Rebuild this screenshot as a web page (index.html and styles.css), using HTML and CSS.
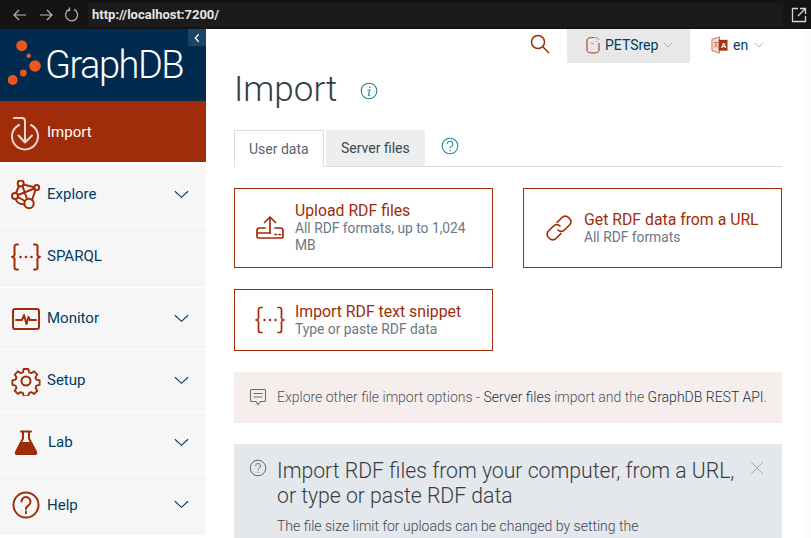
FILE: index.html
```html
<!DOCTYPE html>
<html>
  <head>
    <title>GraphDB Import</title>
    <link rel="stylesheet" href="styles.css">
  </head>
  <body>
    <div class="browser-bar">
      <svg class="browser-icon" viewBox="0 0 16 16"><path d="M14 8H2M7 3 2 8l5 5"/></svg>
      <svg class="browser-icon" viewBox="0 0 16 16"><path d="M2 8h12M9 3l5 5-5 5"/></svg>
      <svg class="browser-icon" viewBox="0 0 16 16"><path d="M5 2.500A6 6 0 1 0 10 2.400M5.500 0.500V3.500H2.500"/></svg>
      <span class="address">http://localhost:7200/</span>
      <svg class="browser-open" viewBox="0 0 16 16"><path d="M7 1.500H1.500v13h13V9M9 1.500h5.500V7M14 2 7 9"/></svg>
    </div>

    <div class="app">
      <aside class="sidebar">
        <div class="logo">
          <svg class="logo-dots" viewBox="0 0 35 46">
            <circle cx="14.700" cy="5.700" r="5.500"/>
            <circle cx="21.700" cy="15.700" r="2.200"/>
            <circle cx="28" cy="26" r="5.800"/>
            <circle cx="16.300" cy="33" r="3.400"/>
            <circle cx="5.700" cy="40" r="5"/>
          </svg>
          <span class="logo-text">GraphDB</span>
          <button class="collapse">
            <svg viewBox="0 0 8 12"><path d="M6 1.500 2 6l4 4.500"/></svg>
          </button>
        </div>

        <a class="nav-item active">
          <svg class="nav-icon import-icon" viewBox="0 0 30 34">
            <path d="M8 8A13 13 0 1 0 20 8"/>
            <path d="M3 1h8a3 3 0 0 1 3 3v21.500M7.500 18.500l6.500 7 7-7"/>
          </svg>
          <span class="nav-label">Import</span>
        </a>
        <a class="nav-item">
          <svg class="nav-icon" viewBox="0 0 30 30">
            <circle cx="9.700" cy="3.500" r="3"/><circle cx="25.700" cy="7.500" r="2.500"/>
            <circle cx="4" cy="16" r="3"/><circle cx="18" cy="23.500" r="4.700"/>
            <path d="M12.500 4.500 23.200 7.200M8 6 5 13M11.500 6 16 19M6.800 17l7 4M24.500 10l-3.500 10M7 15 23.500 8.500M4.500 19c1 3 4.500 5.500 9 5.300"/>
          </svg>
          <span class="nav-label">Explore</span>
          <svg class="nav-caret" viewBox="0 0 16 9"><path d="M1 1l7 6.500L15 1"/></svg>
        </a>
        <a class="nav-item">
          <svg class="nav-icon" viewBox="0 0 30 28">
            <path d="M7 1.500H5.500a2 2 0 0 0-2 2V10a3 3 0 0 1-2.500 4 3 3 0 0 1 2.500 4v6.500a2 2 0 0 0 2 2H7M23 1.500h1.500a2 2 0 0 1 2 2V10a3 3 0 0 0 2.500 4 3 3 0 0 0-2.500 4v6.500a2 2 0 0 1-2 2H23"/>
            <circle class="fill" cx="9.500" cy="14" r="1.300"/>
            <circle class="fill" cx="15" cy="14" r="1.300"/>
            <circle class="fill" cx="20.500" cy="14" r="1.300"/>
          </svg>
          <span class="nav-label">SPARQL</span>
        </a>
        <a class="nav-item">
          <svg class="nav-icon" viewBox="0 0 30 24">
            <rect x="2" y="2" width="26" height="20" rx="2"/>
            <path d="M5 13h6l2-5 2.500 9 2-7 1.500 3h6"/>
          </svg>
          <span class="nav-label">Monitor</span>
          <svg class="nav-caret" viewBox="0 0 16 9"><path d="M1 1l7 6.500L15 1"/></svg>
        </a>
        <a class="nav-item">
          <svg class="nav-icon" viewBox="0 0 30 30">
            <circle cx="15" cy="15" r="4.500"/>
            <path d="M12.500 2h5l.8 3.500 2.500 1 3-2 3.500 3.500-2 3 1 2.500 3.500.8v5l-3.500.8-1 2.500 2 3-3.500 3.500-3-2-2.500 1-.8 3.500h-5l-.8-3.500-2.500-1-3 2-3.500-3.500 2-3-1-2.500-3.500-.8v-5l3.500-.8 1-2.500-2-3 3.500-3.500 3 2 2.500-1z" transform="translate(1.200 1.200) scale(.92)"/>
          </svg>
          <span class="nav-label">Setup</span>
          <svg class="nav-caret" viewBox="0 0 16 9"><path d="M1 1l7 6.500L15 1"/></svg>
        </a>
        <a class="nav-item">
          <svg class="nav-icon" viewBox="0 0 30 26">
            <path d="M10 1.500h10M12 1.500v7L5 22M18 1.500v7L25 22"/>
            <path class="fill" d="M9.500 12h11L26 22.500c.5 1.500 0 2.500-1.500 2.500h-19c-1.500 0-2-1-1.500-2.500z"/>
          </svg>
          <span class="nav-label lab">Lab</span>
          <svg class="nav-caret" viewBox="0 0 16 9"><path d="M1 1l7 6.500L15 1"/></svg>
        </a>
        <a class="nav-item">
          <svg class="nav-icon" viewBox="0 0 30 30">
            <circle cx="15" cy="15" r="12.500"/>
            <path d="M10.500 11.500a4.500 4.500 0 1 1 7 3.800c-1.700 1.100-2.500 2-2.500 3.700"/>
            <path d="M15 21.500v1.800"/>
          </svg>
          <span class="nav-label">Help</span>
          <svg class="nav-caret" viewBox="0 0 16 9"><path d="M1 1l7 6.500L15 1"/></svg>
        </a>
      </aside>

      <div class="page">
        <div class="toolbar">
          <svg class="search" viewBox="0 0 20 20"><circle cx="8" cy="8" r="6.500"/><path d="m12.500 12.500 6.500 6.500"/></svg>
          <div class="repo">
            <svg class="repo-icon" viewBox="0 0 16 18">
              <path d="M2 4v10.500c0 1.500 2.500 2.500 6 2.500s6-1 6-2.500V7"/>
              <path d="M2 4c0-1.500 2.500-2.500 6-2.500"/>
              <path class="light" d="M8 1.500c3 0 6 1 6 2.500M6 7l3 1M11 5.500h1"/>
            </svg>
            <span>PETSrep</span>
            <svg class="caret-small" viewBox="0 0 10 6"><path d="M1 1l4 4 4-4"/></svg>
          </div>
          <div class="lang">
            <svg class="lang-icon" viewBox="0 0 18 19">
              <path class="page-back" d="M1 3.500 9 1v17l-8-2.500z"/>
              <rect class="page-front" x="8" y="4" width="9.500" height="11.500"/>
              <text x="10.500" y="13" class="lang-glyph">A</text>
              <path class="glyph-back" d="M3 7h4M5 6v1.500M3.500 12 6.500 8M4 9l3 3"/>
            </svg>
            <span>en</span>
            <svg class="caret-small" viewBox="0 0 10 6"><path d="M1 1l4 4 4-4"/></svg>
          </div>
        </div>

        <main class="content">
          <div class="title-row">
            <h1>Import</h1>
            <svg class="info-icon" viewBox="0 0 18 18">
              <circle cx="9" cy="9" r="7.800"/>
              <path d="M9.700 4.600v1.300M7.500 8h2.200l-1.300 5.200h2"/>
            </svg>
          </div>

          <div class="tabs">
            <a class="tab selected">User data</a>
            <a class="tab">Server files</a>
            <svg class="tab-help" viewBox="0 0 18 18">
              <circle cx="9" cy="9" r="7.800"/>
              <path d="M6.200 7a2.800 2.800 0 1 1 4.300 2.400C9.500 10 9 10.600 9 11.500"/>
              <path d="M9 13v1.200"/>
            </svg>
          </div>

          <div class="cards">
            <a class="card">
              <svg class="card-icon" viewBox="0 0 30 26">
                <path d="M15 18V2M9.500 7.500 15 2l5.500 5.500"/>
                <path d="M10 13H4.500A2.500 2.500 0 0 0 2 15.500v6A1.500 1.500 0 0 0 3.500 23h23a1.500 1.500 0 0 0 1.500-1.500v-6a2.500 2.500 0 0 0-2.500-2.500H20M2 18h13"/>
                <path d="M20 19.500h1.500M24 19.500h1.500"/>
              </svg>
              <div class="card-text">
                <div class="card-title">Upload RDF files</div>
                <div class="card-sub">All RDF formats, up to 1,024 MB</div>
              </div>
            </a>
            <a class="card">
              <svg class="card-icon" viewBox="0 0 30 30">
                <path d="M13 9.500 18 4.500a4.500 4.500 0 0 1 6.500 0l1 1a4.500 4.500 0 0 1 0 6.500l-5 5a4.500 4.500 0 0 1-6.500 0"/>
                <path d="M17 20.500l-5 5a4.500 4.500 0 0 1-6.500 0l-1-1a4.500 4.500 0 0 1 0-6.500l5-5a4.500 4.500 0 0 1 6.500 0"/>
              </svg>
              <div class="card-text">
                <div class="card-title">Get RDF data from a URL</div>
                <div class="card-sub">All RDF formats</div>
              </div>
            </a>
            <a class="card">
              <svg class="card-icon" viewBox="0 0 30 28">
                <path d="M7 1.500H5.500a2 2 0 0 0-2 2V10a3 3 0 0 1-2.500 4 3 3 0 0 1 2.500 4v6.500a2 2 0 0 0 2 2H7M23 1.500h1.500a2 2 0 0 1 2 2V10a3 3 0 0 0 2.500 4 3 3 0 0 0-2.500 4v6.500a2 2 0 0 1-2 2H23"/>
                <circle class="dot" cx="9.500" cy="14" r="1.200"/>
                <circle class="dot" cx="15" cy="14" r="1.200"/>
                <circle class="dot" cx="20.500" cy="14" r="1.200"/>
              </svg>
              <div class="card-text">
                <div class="card-title">Import RDF text snippet</div>
                <div class="card-sub">Type or paste RDF data</div>
              </div>
            </a>
          </div>

          <div class="notice">
            <svg class="notice-icon" viewBox="0 0 18 18">
              <path d="M2.500 1.500h13a1 1 0 0 1 1 1v10a1 1 0 0 1-1 1h-4L9 16.500 7 13.500H2.500a1 1 0 0 1-1-1v-10a1 1 0 0 1 1-1z"/>
              <path d="M4.500 5.500h9M4.500 9h9"/>
            </svg>
            <p>Explore other file import options - <a>Server files</a> import and the <a>GraphDB REST API</a>.</p>
          </div>

          <div class="help-box">
            <svg class="help-icon" viewBox="0 0 18 18">
              <circle cx="9" cy="9" r="7.800"/>
              <path d="M6.500 7a2.500 2.500 0 1 1 3.800 2.200C9.500 9.800 9 10.400 9 11.200"/>
              <path d="M9 12.800v1"/>
            </svg>
            <div class="help-body">
              <h2>Import RDF files from your computer, from a URL, or type or paste RDF data</h2>
              <p>The file size limit for uploads can be changed by setting the</p>
            </div>
            <svg class="help-close" viewBox="0 0 14 14"><path d="M1 1l12 12M13 1 1 13"/></svg>
          </div>
        </main>
      </div>
    </div>
  </body>
</html>
```

FILE: styles.css
```css
* {
  box-sizing: border-box;
}

body {
  margin: 0;
  height: 538px;
  overflow: hidden;
  background-color: #fff;
  font-family: Roboto, "Liberation Sans", sans-serif;
  color: #3a4654;
}

svg {
  flex-shrink: 0;
  fill: none;
}

/* Browser chrome */
.browser-bar {
  height: 29px;
  background-color: #141414;
  display: flex;
  align-items: center;
  padding-left: 12px;
  gap: 10px;
}

.browser-icon {
  width: 16px;
  height: 16px;
  stroke: #b9b9b9;
  stroke-width: 1.2;
}

.address {
  margin-left: -2px;
  padding: 2px 0 2px 4px;
  flex: 1;
  background-color: #1b1b1b;
  color: #e6e6e6;
  font-size: 13px;
  font-weight: 700;
  height: 24px;
  line-height: 20px;
}

.browser-open {
  width: 16px;
  height: 16px;
  margin: 0 4px 0 -2px;
  stroke: #d4d4d4;
  stroke-width: 1.3;
}

.app {
  display: flex;
  height: 509px;
}

/* Sidebar */
.sidebar {
  width: 206px;
  height: 506px;
  flex-shrink: 0;
  overflow: hidden;
  background-color: #f6f6f6;
}

.logo {
  height: 72px;
  background-color: #002b4e;
  display: flex;
  align-items: center;
  padding-left: 7px;
  position: relative;
}

.logo-dots {
  width: 35px;
  height: 46px;
  margin-top: -4px;
}

.logo-dots circle {
  fill: #ea5520;
}

.logo-text {
  font-family: Roboto, sans-serif;
  font-weight: 300;
  font-size: 38px;
  color: #fff;
  margin-left: 3px;
  letter-spacing: -1.5px;
}

.collapse {
  position: absolute;
  top: 0;
  right: 0;
  width: 18px;
  height: 17px;
  padding: 0;
  border: none;
  background-color: #1c4565;
  display: flex;
  align-items: center;
  justify-content: center;
}

.collapse svg {
  width: 8px;
  height: 10px;
  stroke: #fff;
  stroke-width: 1.5;
}

.nav-item {
  height: 62px;
  display: flex;
  align-items: center;
  padding-left: 11px;
  border-bottom: 1px solid #fff;
  color: #003b63;
  font-size: 15px;
}

.nav-item.active {
  height: 63px;
  background-color: #a02c0a;
  background-clip: padding-box;
  color: #fff;
  border-bottom: 2px solid #fff;
}

.nav-icon {
  width: 30px;
  height: 30px;
  stroke: #a02c0a;
  stroke-width: 2;
  stroke-linecap: round;
  stroke-linejoin: round;
}

.active .nav-icon {
  stroke: #efd8cf;
}

.nav-icon.import-icon {
  height: 34px;
  margin-top: 4px;
}

.nav-icon .fill {
  fill: #a02c0a;
  stroke: none;
}

.nav-label {
  margin-left: 6px;
  margin-bottom: 2px;
  flex: 1;
}

.active .nav-label,
.nav-item:last-child .nav-label {
  margin-bottom: 0;
}

.nav-label.lab {
  margin-left: 7px;
}

.nav-caret {
  width: 15px;
  height: 9px;
  margin-right: 17px;
  stroke: #003b63;
  stroke-width: 1.2;
}

/* Top toolbar */
.page {
  flex: 1;
  min-width: 0;
  border-right: 6px solid #fcfcfc;
}

.toolbar {
  height: 34px;
  display: flex;
  justify-content: flex-end;
  align-items: center;
  padding-right: 29px;
  font-size: 14px;
  color: #003b63;
}

.search {
  width: 20px;
  height: 20px;
  margin-right: 17px;
  margin-top: -4px;
  stroke: #a02c0a;
  stroke-width: 1.5;
}

.repo {
  width: 123px;
  height: 34px;
  background-color: #e8e8e8;
  display: flex;
  align-items: center;
  padding: 0 0 2px 18px;
  gap: 4px;
}

.repo-icon {
  width: 16px;
  height: 18px;
  stroke: #a02c0a;
  stroke-width: 1;
}

.repo-icon .light {
  stroke: #e0764f;
}

.caret-small {
  width: 10px;
  height: 6px;
  stroke: #b4b4b4;
  stroke-width: 1;
  margin-left: 1px;
}

.lang {
  width: 86px;
  display: flex;
  align-items: center;
  padding: 0 0 2px 21px;
  gap: 5px;
}

.lang-icon {
  width: 17px;
  height: 18px;
}

.page-back {
  fill: #f5ddd4;
  stroke: #b2502d;
  stroke-width: 0.8;
}

.page-front {
  fill: #a8330f;
}

.lang-glyph {
  fill: #fff;
  font-size: 8px;
  font-family: "Liberation Sans", sans-serif;
  font-weight: 700;
}

.glyph-back {
  stroke: #a8330f;
  stroke-width: 0.7;
}

/* Main content */
.content {
  padding: 0 23px 0 28px;
}

.title-row {
  height: 67px;
  display: flex;
  align-items: center;
  padding-bottom: 14px;
}

h1 {
  margin: 0;
  font-size: 35px;
  font-weight: 300;
  color: #363c42;
}

.info-icon {
  width: 18px;
  height: 18px;
  margin-left: 23px;
  margin-top: 2px;
  stroke: #1b8a94;
  stroke-width: 1.1;
}

.tabs {
  height: 37px;
  display: flex;
  align-items: flex-end;
  border-bottom: 1px solid #dcdcdc;
}

.tab {
  height: 36px;
  padding: 0 15px;
  line-height: 37px;
  font-size: 14px;
  background-color: #eee;
  color: #3a4654;
  margin-right: 2px;
}

.tab.selected {
  width: 90px;
  background-color: #fff;
  color: #5a6470;
  border: 1px solid #dcdcdc;
  border-bottom: none;
  padding: 0 14px;
  margin-bottom: -1px;
  height: 37px;
}

.tab-help {
  width: 18px;
  height: 18px;
  margin: 0 0 11px 14px;
  stroke: #1b8a94;
  stroke-width: 1.1;
}

.cards {
  display: grid;
  grid-template-columns: 259px 259px;
  column-gap: 30px;
  row-gap: 21px;
  margin-top: 21px;
}

.card {
  display: flex;
  align-items: center;
  padding: 0 14px 0 20px;
  border: 1px solid #a02c0a;
  min-height: 62px;
}

.card:first-child,
.card:nth-child(2) {
  height: 80px;
}

.card-icon {
  width: 30px;
  height: 30px;
  stroke: #a02c0a;
  stroke-width: 1.7;
  stroke-linecap: round;
  stroke-linejoin: round;
}

.card-icon .dot {
  fill: #a02c0a;
  stroke: none;
}

.card-text {
  margin-left: 10px;
}

.card-title {
  font-size: 15.800px;
  line-height: 18px;
  color: #a02c0a;
}

.card-sub {
  font-size: 13.800px;
  line-height: 17px;
  color: #6d7783;
}

.notice {
  margin-top: 21px;
  height: 51px;
  background-color: #f6eeec;
  display: flex;
  align-items: center;
  padding: 0 0 2px 15px;
  font-size: 14px;
  font-weight: 300;
  color: #4c5560;
}

.notice p {
  margin: 0 0 0 10px;
}

.notice a {
  color: #16324c;
}

.notice-icon {
  width: 18px;
  height: 18px;
  stroke: #6a6f74;
  stroke-width: 1.100;
}

.help-box {
  margin-top: 21px;
  height: 120px;
  background-color: #e4e8ec;
  display: flex;
  padding: 14px 16px 0 15px;
}

.help-icon {
  width: 18px;
  height: 18px;
  margin-top: 1px;
  stroke: #5f6770;
  stroke-width: 1;
}

.help-body {
  margin-left: 10px;
  flex: 1;
}

h2 {
  margin: 0;
  font-size: 21.200px;
  line-height: 25px;
  font-weight: 300;
  color: #363c42;
}

.help-body p {
  margin: 10px 0 0;
  font-size: 14px;
  font-weight: 300;
  color: #3e4650;
}

.help-close {
  width: 14px;
  height: 14px;
  margin: 3px 2px 0 14px;
  stroke: #a8adb2;
  stroke-width: 1;
}
```
